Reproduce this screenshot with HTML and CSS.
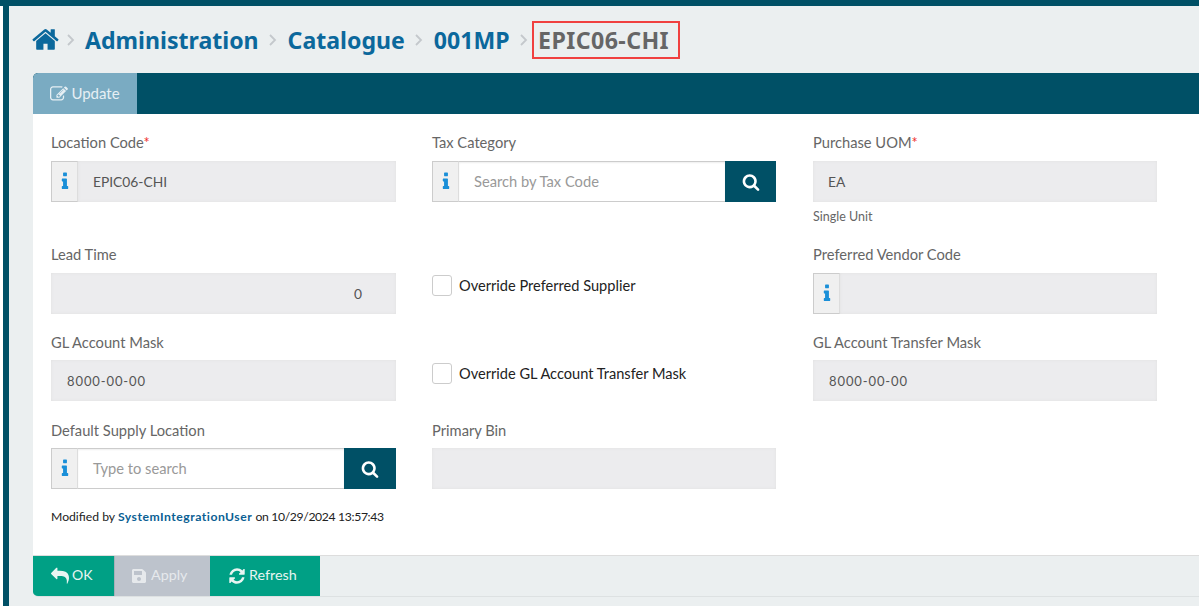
FILE: index.html
```html
<!DOCTYPE html>
<html lang="en">
<head>
    <meta charset="UTF-8">
    <title>Location Catalogue - EPIC06-CHI</title>
    <link rel="stylesheet" href="styles.css">
</head>
<body>
    <div class="page">
        <nav class="breadcrumb">
            <svg class="home" viewBox="0 0 1792 1792"><path d="M1472 992v480q0 26-19 45t-45 19h-384v-384h-256v384h-384q-26 0-45-19t-19-45v-480q0-1 .5-3t.5-3l575-474 575 474q1 2 1 6zm223-69l-62 74q-8 9-21 11h-3q-13 0-21-7l-692-577-692 577q-12 8-24 7-13-2-21-11l-62-74q-8-10-7-23.500t11-21.500l719-599q32-26 76-26t76 26l244 204v-195q0-14 9-23t23-9h192q14 0 23 9t9 23v408l219 182q10 8 11 21.500t-7 23.500z"/></svg>
            <svg class="sep" viewBox="0 0 8 12"><path d="M1 1l5 5-5 5"/></svg>
            <a class="crumb">Administration</a>
            <svg class="sep" viewBox="0 0 8 12"><path d="M1 1l5 5-5 5"/></svg>
            <a class="crumb">Catalogue</a>
            <svg class="sep" viewBox="0 0 8 12"><path d="M1 1l5 5-5 5"/></svg>
            <a class="crumb">001MP</a>
            <svg class="sep last" viewBox="0 0 8 12"><path d="M1 1l5 5-5 5"/></svg>
            <span class="crumb-current">EPIC06-CHI</span>
        </nav>

        <div class="panel">
            <div class="tabs">
                <div class="tab">
                    <svg class="icon" viewBox="0 0 1792 1792"><path d="M888 1184l116-116-152-152-116 116v56h96v96h56zm440-720q-16-16-33 1l-350 350q-17 17-1 33t33-1l350-350q17-17 1-33zm80 594v190q0 119-84.500 203.500t-203.500 84.500h-832q-119 0-203.500-84.500t-84.500-203.500v-832q0-119 84.500-203.500t203.500-84.500h832q63 0 117 25 15 7 18 23 3 17-9 29l-49 49q-14 14-32 8-23-6-45-6h-832q-66 0-113 47t-47 113v832q0 66 47 113t113 47h832q66 0 113-47t47-113v-126q0-13 9-22l64-64q15-15 35-7t20 29zm-96-738l288 288-672 672h-288v-288zm444 132l-92 92-288-288 92-92q27-27 68-27t68 27l152 152q27 27 27 68t-27 68z"/></svg>
                    <span class="tab-text">Update</span>
                </div>
            </div>

            <div class="form">
                <div class="grid">
                    <div class="field">
                        <label>Location Code<span class="req">*</span></label>
                        <div class="group">
                            <span class="addon"><svg viewBox="0 0 1792 1792" preserveAspectRatio="none"><path d="M1216 1344v128q0 26-19 45t-45 19h-512q-26 0-45-19t-19-45v-128q0-26 19-45t45-19h64v-384h-64q-26 0-45-19t-19-45v-128q0-26 19-45t45-19h384q26 0 45 19t19 45v576h64q26 0 45 19t19 45zm-128-1152v192q0 26-19 45t-45 19h-256q-26 0-45-19t-19-45v-192q0-26 19-45t45-19h256q26 0 45 19t19 45z"/></svg></span>
                            <div class="input disabled">EPIC06-CHI</div>
                        </div>
                    </div>
                    <div class="field">
                        <label>Tax Category</label>
                        <div class="group">
                            <span class="addon"><svg viewBox="0 0 1792 1792" preserveAspectRatio="none"><path d="M1216 1344v128q0 26-19 45t-45 19h-512q-26 0-45-19t-19-45v-128q0-26 19-45t45-19h64v-384h-64q-26 0-45-19t-19-45v-128q0-26 19-45t45-19h384q26 0 45 19t19 45v576h64q26 0 45 19t19 45zm-128-1152v192q0 26-19 45t-45 19h-256q-26 0-45-19t-19-45v-192q0-26 19-45t45-19h256q26 0 45 19t19 45z"/></svg></span>
                            <div class="input search">Search by Tax Code</div>
                            <span class="search-btn"><svg viewBox="0 0 1792 1792"><path d="M1216 832q0-185-131.500-316.500t-316.500-131.500-316.500 131.500-131.500 316.500 131.500 316.500 316.500 131.500 316.500-131.500 131.500-316.500zm512 832q0 52-38 90t-90 38q-54 0-90-38l-343-342q-179 124-399 124-143 0-273.500-55.500t-225-150-150-225-55.500-273.500 55.500-273.500 150-225 225-150 273.500-55.500 273.500 55.500 225 150 150 225 55.500 273.500q0 220-124 399l343 343q37 37 37 90z"/></svg></span>
                        </div>
                    </div>
                    <div class="field">
                        <label>Purchase UOM<span class="req">*</span></label>
                        <div class="input disabled plain">EA</div>
                        <div class="help">Single Unit</div>
                    </div>

                    <div class="field">
                        <label>Lead Time</label>
                        <div class="input disabled number">0</div>
                    </div>
                    <div class="field check-field">
                        <span class="checkbox"></span>
                        <span class="check-label">Override Preferred Supplier</span>
                    </div>
                    <div class="field">
                        <label>Preferred Vendor Code</label>
                        <div class="group">
                            <span class="addon"><svg viewBox="0 0 1792 1792" preserveAspectRatio="none"><path d="M1216 1344v128q0 26-19 45t-45 19h-512q-26 0-45-19t-19-45v-128q0-26 19-45t45-19h64v-384h-64q-26 0-45-19t-19-45v-128q0-26 19-45t45-19h384q26 0 45 19t19 45v576h64q26 0 45 19t19 45zm-128-1152v192q0 26-19 45t-45 19h-256q-26 0-45-19t-19-45v-192q0-26 19-45t45-19h256q26 0 45 19t19 45z"/></svg></span>
                            <div class="input disabled"></div>
                        </div>
                    </div>

                    <div class="field tight">
                        <label>GL Account Mask</label>
                        <div class="input disabled mask">8000-00-00</div>
                    </div>
                    <div class="field check-field">
                        <span class="checkbox"></span>
                        <span class="check-label">Override GL Account Transfer Mask</span>
                    </div>
                    <div class="field tight">
                        <label>GL Account Transfer Mask</label>
                        <div class="input disabled mask">8000-00-00</div>
                    </div>

                    <div class="field tight">
                        <label>Default Supply Location</label>
                        <div class="group">
                            <span class="addon"><svg viewBox="0 0 1792 1792" preserveAspectRatio="none"><path d="M1216 1344v128q0 26-19 45t-45 19h-512q-26 0-45-19t-19-45v-128q0-26 19-45t45-19h64v-384h-64q-26 0-45-19t-19-45v-128q0-26 19-45t45-19h384q26 0 45 19t19 45v576h64q26 0 45 19t19 45zm-128-1152v192q0 26-19 45t-45 19h-256q-26 0-45-19t-19-45v-192q0-26 19-45t45-19h256q26 0 45 19t19 45z"/></svg></span>
                            <div class="input search">Type to search</div>
                            <span class="search-btn"><svg viewBox="0 0 1792 1792"><path d="M1216 832q0-185-131.500-316.500t-316.500-131.500-316.500 131.500-131.500 316.500 131.500 316.500 316.500 131.500 316.500-131.500 131.500-316.500zm512 832q0 52-38 90t-90 38q-54 0-90-38l-343-342q-179 124-399 124-143 0-273.500-55.500t-225-150-150-225-55.500-273.500 55.500-273.500 150-225 225-150 273.500-55.500 273.500 55.500 225 150 150 225 55.500 273.500q0 220-124 399l343 343q37 37 37 90z"/></svg></span>
                        </div>
                    </div>
                    <div class="field tight">
                        <label>Primary Bin</label>
                        <div class="input disabled"></div>
                    </div>
                </div>
                <p class="modified">Modified by <a>SystemIntegrationUser</a> <span class="stamp">on 10/29/2024 13:57:43</span></p>
            </div>

            <div class="footer">
                <button class="btn ok">
                    <svg class="icon" viewBox="0 0 1792 1792"><path d="M1792 1120q0 166-127 451-3 7-10.500 24t-13.500 30-13 22q-12 17-28 17-15 0-23.500-10t-8.500-25q0-9 2.500-26.500t2.500-23.500q5-68 5-123 0-101-17.500-181t-48.500-138.500-80-101-105.500-69.500-133-42.500-154-21.500-175.500-6h-224v256q0 26-19 45t-45 19-45-19l-512-512q-19-19-19-45t19-45l512-512q19-19 45-19t45 19 19 45v256h224q713 0 875 403 53 134 53 333z"/></svg>
                    OK
                </button>
                <button class="btn apply">
                    <svg class="icon" viewBox="0 0 448 512"><path d="M433.941 129.941l-83.882-83.882A48 48 0 0 0 316.118 32H48C21.490 32 0 53.490 0 80v352c0 26.510 21.490 48 48 48h352c26.510 0 48-21.490 48-48V163.882a48 48 0 0 0-14.059-33.941zM224 416c-35.346 0-64-28.654-64-64 0-35.346 28.654-64 64-64s64 28.654 64 64c0 35.346-28.654 64-64 64zm96-304.520V212c0 6.627-5.373 12-12 12H76c-6.627 0-12-5.373-12-12V108c0-6.627 5.373-12 12-12h228.520c3.183 0 6.235 1.264 8.485 3.515l3.480 3.480A11.996 11.996 0 0 1 320 111.480z"/></svg>
                    Apply
                </button>
                <button class="btn refresh">
                    <svg class="icon" viewBox="0 0 1792 1792"><path d="M1639 1056q0 5-1 7-64 268-268 434.500t-478 166.500q-146 0-282.500-55t-243.500-157l-129 129q-19 19-45 19t-45-19-19-45v-448q0-26 19-45t45-19h448q26 0 45 19t19 45-19 45l-137 137q71 66 161 102t187 36q134 0 250-65t186-179q11-17 53-117 8-23 30-23h192q13 0 22.500 9.500t9.500 22.500zm25-800v448q0 26-19 45t-45 19h-448q-26 0-45-19t-19-45 19-45l138-138q-148-137-349-137-134 0-250 65t-186 179q-11 17-53 117-8 23-30 23h-199q-13 0-22.500-9.500t-9.500-22.500v-7q65-268 270-434.500t480-166.500q146 0 284 55.500t245 156.500l130-129q19-19 45-19t45 19 19 45z"/></svg>
                    Refresh
                </button>
            </div>
        </div>
    </div>
</body>
</html>
```

FILE: styles.css
```css
html, body {
    margin: 0;
    padding: 0;
    height: 606px;
    overflow: hidden;
    background: #fff;
}
body {
    font-family: 'Lato', 'Noto Sans', sans-serif;
    font-size: 14px;
    color: #555;
    padding-left: 3px;
    border-top: 6px solid #005066;
    box-sizing: border-box;
}
.page {
    height: 600px;
    background: #ebeff0;
    border-left: 6px solid #005066;
    padding-left: 24px;
}
.breadcrumb {
    height: 67px;
    display: flex;
    align-items: center;
    font-family: 'Noto Sans', sans-serif;
}
.home {
    width: 29px;
    height: 29px;
    margin: 0 -4px 0 -2px;
    fill: #0b689c;
}
.sep {
    width: 8px;
    height: 12px;
    margin: 0 10.500px;
    fill: none;
    stroke: #c4c8cc;
    stroke-width: 1.800;
}
.sep.last {
    margin-right: 4px;
}
.crumb {
    font-size: 23.100px;
    font-weight: 700;
    color: #0b689c;
    line-height: 34px;
}
.crumb-current {
    font-size: 23.200px;
    font-weight: 700;
    letter-spacing: .4px;
    color: #666;
    border: 2px solid #f04040;
    padding: 0 9px 0 4px;
    line-height: 34px;
}
.panel {
    background: #fff;
    border-radius: 5px 0 0 5px;
    overflow: hidden;
    border-bottom: 1px solid #dde1e2;
}
.tabs {
    height: 41px;
    background: #005066;
    display: flex;
}
.tab {
    width: 104px;
    background: #7aabc2;
    color: #e6eff4;
    font-size: 15px;
    display: flex;
    align-items: center;
    justify-content: center;
    gap: 3px;
    border-radius: 5px 0 0 0;
}
.tab-text {
    padding-bottom: 2px;
}
.icon {
    width: 18px;
    height: 18px;
    fill: currentColor;
    flex: none;
}
.form {
    padding: 20px 18px 0;
    height: 441px;
    box-sizing: border-box;
}
.grid {
    display: grid;
    grid-template-columns: 345px 345px 344px;
    column-gap: 36px;
    row-gap: 20px;
}
.grid > .field:nth-child(3n+2) {
    padding-right: 1px;
}
.field label {
    display: block;
    height: 18px;
    line-height: 16px;
    margin-bottom: 9px;
    font-size: 14.700px;
    color: #666;
}
.field.tight label {
    margin-bottom: 8px;
}
.field.tight {
    padding-bottom: 1px;
}
.req {
    color: #f03030;
}
.group {
    display: flex;
    height: 41px;
}
.addon {
    width: 27px;
    flex: none;
    background: #f0f0f0;
    border: 1px solid #ccc;
    border-right: 1px solid #ddd;
    box-sizing: border-box;
    display: flex;
    align-items: center;
    justify-content: center;
}
.addon svg {
    width: 18px;
    height: 21px;
    fill: #1a8fd8;
}
.input {
    height: 41px;
    flex: 1;
    box-sizing: border-box;
    padding: 0 15px;
    line-height: 41px;
    font-size: 13.800px;
    color: #555;
}
.input.disabled {
    background: #ececee;
    box-shadow: inset 0 0 3px #e0e0e0;
}
.input.search {
    background: #fff;
    color: #999;
    border-top: 1px solid #ccc;
    border-bottom: 1px solid #ccc;
    line-height: 39px;
    font-size: 14.700px;
    box-shadow: inset 0 1px 2px #eee;
}
.input.number {
    text-align: right;
    padding-right: 34px;
}
.input.mask {
    line-height: 43px;
    padding-left: 16px;
    letter-spacing: .9px;
    font-size: 13px;
}
.search-btn {
    width: 51px;
    flex: none;
    background: #005066;
    display: flex;
    align-items: center;
    justify-content: center;
}
.tight .search-btn {
    width: 52px;
}
.search-btn svg {
    width: 18px;
    height: 18px;
    fill: #fff;
}
.help {
    height: 24px;
    line-height: 30px;
    font-size: 12.500px;
    color: #666;
}
.check-field {
    display: flex;
    align-items: flex-start;
    gap: 7px;
    padding-top: 29px;
}
.checkbox {
    width: 18px;
    height: 19px;
    border: 1px solid #ccc;
    border-radius: 3px;
    background: #fff;
    flex: none;
}
.check-label {
    font-size: 14.600px;
    color: #222;
    line-height: 22px;
}
.modified {
    margin: 18px 0 0;
    font-size: 12.200px;
    line-height: 18px;
    color: #222;
}
.modified a {
    color: #0b5f94;
    font-weight: 700;
    letter-spacing: .5px;
}
.stamp {
    letter-spacing: -.35px;
}
.footer {
    height: 41px;
    background: #ebeff0;
    border-top: 1px solid #ddd;
    box-sizing: border-box;
    display: flex;
}
.btn {
    border: none;
    padding: 0 0 4px;
    height: 40px;
    font: inherit;
    font-size: 14.300px;
    color: #e8f5f2;
    display: flex;
    align-items: center;
    gap: 4px;
}
.btn .icon {
    margin-top: 4px;
}
.btn.ok {
    width: 81px;
    padding-left: 18px;
    font-size: 14px;
    gap: 3px;
    background: #00a085;
}
.btn.apply {
    width: 96px;
    padding-left: 16px;
    background: #bdc3cc;
    border-left: 1px solid #a8b0b8;
    color: #e6e9ec;
}
.btn.apply .icon {
    width: 16px;
    height: 16px;
}
.btn.refresh {
    width: 110px;
    padding-left: 18px;
    gap: 3px;
    background: #00a085;
}
```
